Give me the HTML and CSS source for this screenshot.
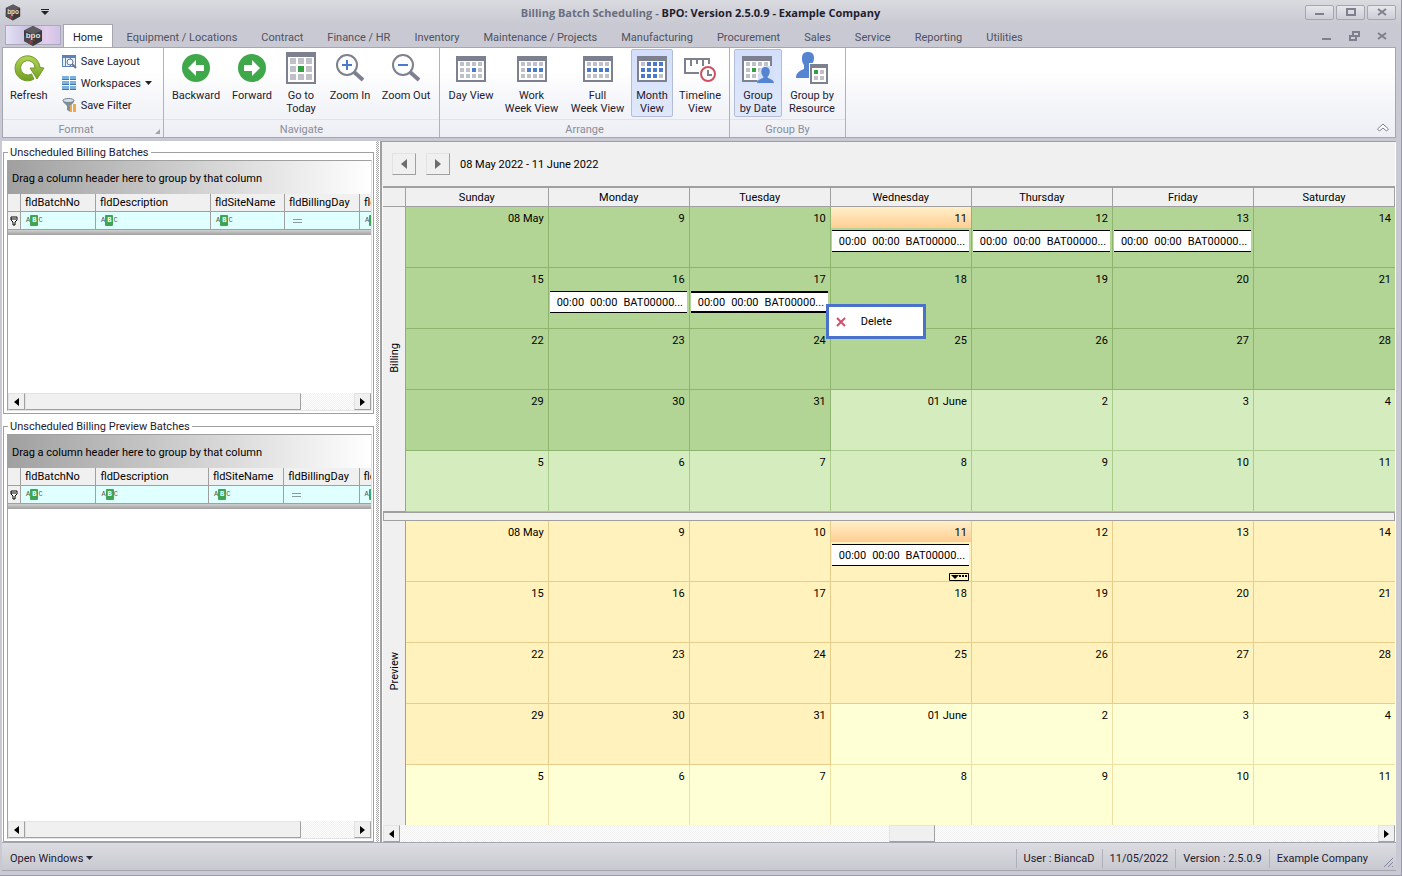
FILE: index.html
```html
<!DOCTYPE html>
<html lang="en">
<head>
    <meta charset="utf-8">
    <title>Billing Batch Scheduling - BPO</title>
    <link rel="stylesheet" href="styles.css">
</head>
<body>
    <!-- Shared icons -->
    <svg class="sprite" aria-hidden="true">
        <symbol id="logo" viewBox="0 0 20 20">
            <path d="M10 0l9 4.500v10.500l-9 5-9-5V4.500z" fill="#3b3a3c"/>
            <path d="M10 0l9 4.500-9 4-9-4z" fill="#5c5b5e"/>
            <path d="M10 11v9l-9-5v-5z" fill="#4c4a4c"/>
            <path d="M6 14l3 1-2 3zM10 13l2 1-1 1z" fill="#b03a3a"/>
            <text x="10" y="12" text-anchor="middle" font-size="8" font-weight="bold" fill="#e2e2e5" font-family="Liberation Sans">bpo</text>
        </symbol>
        <symbol id="cal-frame" viewBox="0 0 30 26">
            <path d="M0 0h30v26H0z" fill="#7d808f"/>
            <path d="M2 5h26v19H2z" fill="#fff"/>
            <path d="M4 6h4v4H4zM10 6h4v4h-4zM16 6h4v4h-4zM22 6h4v4h-4zM4 12h4v4H4zM10 12h4v4h-4zM16 12h4v4h-4zM22 12h4v4h-4zM4 18h4v4H4zM10 18h4v4h-4zM16 18h4v4h-4zM22 18h4v4h-4z" fill="#c0c0c8"/>
        </symbol>
        <symbol id="person" viewBox="0 0 17 17">
            <path d="M8.500 0c3 0 4.500 2 4.200 5-.2 2-1 3.500-2 4.500v1.500c3 .8 5.800 2 6.300 5H0c.5-3 3.300-4.200 6.300-5V9.500c-1-1-1.800-2.500-2-4.500C4 2 5.500 0 8.500 0z" fill="#5584d1"/>
        </symbol>
    </svg>

    <div class="window">
        <header class="titlebar">
            <div class="quick">
                <svg width="16" height="17"><use href="#logo"/></svg>
                <button class="quick-more" aria-label="Customize toolbar"><svg width="8" height="6"><path d="M0 0h8v1H0zM0 2h8L4 6z" fill="#222"/></svg></button>
            </div>
            <h1><span>Billing Batch Scheduling - </span>BPO: Version 2.5.0.9 - Example Company</h1>
            <div class="win-buttons">
                <button aria-label="Minimize"><svg width="10" height="8"><path d="M0 5h9v2H0z" fill="#7d808c"/></svg></button>
                <button aria-label="Maximize"><svg width="10" height="8"><path d="M1 1h8v6H1z" fill="none" stroke="#7d808c" stroke-width="2"/></svg></button>
                <button aria-label="Close"><svg width="10" height="8"><path d="M1 1l8 6M9 1L1 7" stroke="#7d808c" stroke-width="2"/></svg></button>
            </div>
        </header>

        <nav class="tabs">
            <button class="app-button" aria-label="Application menu"><svg width="20" height="20"><use href="#logo"/></svg></button>
            <a href="#" class="tab active">Home</a>
            <a href="#" class="tab">Equipment / Locations</a>
            <a href="#" class="tab">Contract</a>
            <a href="#" class="tab">Finance / HR</a>
            <a href="#" class="tab">Inventory</a>
            <a href="#" class="tab">Maintenance / Projects</a>
            <a href="#" class="tab">Manufacturing</a>
            <a href="#" class="tab">Procurement</a>
            <a href="#" class="tab">Sales</a>
            <a href="#" class="tab">Service</a>
            <a href="#" class="tab">Reporting</a>
            <a href="#" class="tab">Utilities</a>
            <div class="mdi-buttons">
                <button aria-label="Minimize page"><svg width="11" height="10"><path d="M1 7h9v2H1z" fill="#7d808c"/></svg></button>
                <button aria-label="Restore page"><svg width="11" height="10"><path d="M4 1h6v4H4zM1 5h6v4H1z" fill="#cfcfd8" stroke="#7d808c" stroke-width="2"/></svg></button>
                <button aria-label="Close page"><svg width="11" height="10"><path d="M1 2l8 6M9 2L1 8" stroke="#7d808c" stroke-width="2"/></svg></button>
            </div>
        </nav>

        <section class="ribbon">
            <div class="group">
                <div class="group-body format">
                    <button class="big">
                        <svg width="32" height="32" viewBox="0 0 32 32">
                            <defs><linearGradient id="green" x1="0" y1="0" x2="0" y2="1"><stop offset="0" stop-color="#b5d557"/><stop offset="1" stop-color="#6f9f20"/></linearGradient></defs>
                            <path d="M27 15.500A12.500 12.500 0 1 0 21 27l-2.500-5A7.200 7.200 0 1 1 22 16h-5l7 11 7-11z" fill="url(#green)" stroke="#739a2d"/>
                        </svg>
                        Refresh
                    </button>
                    <div class="small-list">
                        <button class="small">
                            <svg width="15" height="15"><path d="M0 1h14v12H0z" fill="#5c83b8"/><path d="M1 4h2v8H1zM4 4h4v8H4zM9 4h4v8H9z" fill="#e6f0fa"/><circle cx="8" cy="8" r="3" fill="#f5f8fc" stroke="#68788e"/><path d="M10 10l4 4" stroke="#68788e" stroke-width="2"/></svg>
                            Save Layout
                        </button>
                        <button class="small">
                            <svg width="15" height="15"><path d="M0 0h7v4H0zM8 0h6v4H8zM0 5h7v4H0zM8 5h6v4H8zM0 10h7v4H0zM8 10h6v4H8z" fill="#7db2df"/><path d="M0 3h7v1H0zM8 3h6v1H8zM0 8h7v1H0zM8 8h6v1H8zM0 13h7v1H0zM8 13h6v1H8z" fill="#3d78b0"/></svg>
                            Workspaces
                            <svg width="7" height="4"><path d="M0 0h7L3.500 4z" fill="#222"/></svg>
                        </button>
                        <button class="small">
                            <svg width="15" height="15"><path d="M1 2h11v2L8.500 8v6L5 12V8L1 4z" fill="#7e8f9e"/><ellipse cx="6.500" cy="2.500" rx="5.500" ry="2" fill="#d8e2ea" stroke="#6e7d8b"/><path d="M8 7h2v7H8zM11 6h3v8h-3z" fill="#efaa45"/></svg>
                            Save Filter
                        </button>
                    </div>
                </div>
                <h2>Format</h2>
                <svg class="launcher" width="5" height="5"><path d="M5 0v5H0z" fill="#a0a3ac"/></svg>
            </div>

            <div class="group">
                <div class="group-body navigate">
                    <button class="big">
                        <svg width="32" height="32" viewBox="0 0 32 32"><circle cx="16" cy="16" r="14" fill="#3fa84b"/><path d="M8 16l8-8v5h8v6h-8v5z" fill="#fff"/></svg>
                        Backward
                    </button>
                    <button class="big">
                        <svg width="32" height="32" viewBox="0 0 32 32"><circle cx="16" cy="16" r="14" fill="#3fa84b"/><path d="M24 16l-8-8v5H8v6h8v5z" fill="#fff"/></svg>
                        Forward
                    </button>
                    <button class="big">
                        <svg width="32" height="32" viewBox="0 0 32 32"><path d="M1 0h30v32H1z" fill="#7d808f"/><path d="M3 5h26v25H3z" fill="#fff"/><path d="M5 6h6v6H5zM13 6h6v6h-6zM21 6h6v6h-6zM5 14h6v6H5zM21 14h6v6h-6zM5 22h6v6H5zM13 22h6v6h-6zM21 22h6v6h-6z" fill="#c0c0c8"/><path d="M13 14h6v6h-6z" fill="#35a042"/></svg>
                        Go to<br>Today
                    </button>
                    <button class="big">
                        <svg width="32" height="32" viewBox="0 0 32 32"><circle cx="13" cy="13" r="10" fill="none" stroke="#7d808f" stroke-width="2"/><path d="M20 20l9 8" stroke="#7d808f" stroke-width="4"/><path d="M8 13h10M13 8v10" stroke="#4a7bcb" stroke-width="2"/></svg>
                        Zoom In
                    </button>
                    <button class="big">
                        <svg width="32" height="32" viewBox="0 0 32 32"><circle cx="13" cy="13" r="10" fill="none" stroke="#7d808f" stroke-width="2"/><path d="M20 20l9 8" stroke="#7d808f" stroke-width="4"/><path d="M8 13h10" stroke="#4a7bcb" stroke-width="2"/></svg>
                        Zoom Out
                    </button>
                </div>
                <h2>Navigate</h2>
            </div>

            <div class="group">
                <div class="group-body arrange">
                    <button class="big">
                        <svg width="30" height="32" viewBox="0 -4 30 32"><use href="#cal-frame" width="30" height="26"/><path d="M16 12h4v4h-4z" fill="#4a7bcb"/></svg>
                        Day View
                    </button>
                    <button class="big">
                        <svg width="30" height="32" viewBox="0 -4 30 32"><use href="#cal-frame" width="30" height="26"/><path d="M10 12h4v4h-4zM16 12h4v4h-4zM22 12h4v4h-4z" fill="#4a7bcb"/></svg>
                        Work<br>Week View
                    </button>
                    <button class="big">
                        <svg width="30" height="32" viewBox="0 -4 30 32"><use href="#cal-frame" width="30" height="26"/><path d="M4 12h4v4H4zM10 12h4v4h-4zM16 12h4v4h-4zM22 12h4v4h-4z" fill="#4a7bcb"/></svg>
                        Full<br>Week View
                    </button>
                    <button class="big pressed">
                        <svg width="30" height="32" viewBox="0 -4 30 32"><use href="#cal-frame" width="30" height="26"/><path d="M10 6h4v4h-4zM16 6h4v4h-4zM22 6h4v4h-4zM4 12h4v4H4zM10 12h4v4h-4zM16 12h4v4h-4zM22 12h4v4h-4zM4 18h4v4H4zM10 18h4v4h-4zM16 18h4v4h-4z" fill="#4a7bcb"/></svg>
                        Month<br>View
                    </button>
                    <button class="big">
                        <svg width="32" height="32" viewBox="0 0 32 32"><path d="M15 21H1V7h24v5M7 7v7M13 7v5M19 7v7" fill="none" stroke="#7d808f" stroke-width="2"/><circle cx="24" cy="22" r="7" fill="#fff" stroke="#d04f60" stroke-width="2"/><path d="M24 18v5h4" fill="none" stroke="#7d808f" stroke-width="2"/></svg>
                        Timeline<br>View
                    </button>
                </div>
                <h2>Arrange</h2>
            </div>

            <div class="group">
                <div class="group-body group-by">
                    <button class="big pressed">
                        <svg width="32" height="32" viewBox="0 0 32 32"><use href="#cal-frame" y="4" width="30" height="26"/><path d="M10 16h4v4h-4z" fill="#35a042"/><path d="M17 19q3-6 10-5h5v18H15z" fill="#d6e1f9"/><use href="#person" x="15" y="15" width="17" height="17"/></svg>
                        Group<br>by Date
                    </button>
                    <button class="big">
                        <svg width="32" height="32" viewBox="0 0 32 32"><path d="M12 0c4 0 6 2 6 6 0 3-1 5-3 7v2h-1v11H0c0-5 3-7 8-9v-4C6 11 6 8 6 6c0-4 2-6 6-6z" fill="#5584d1"/><path d="M13 11h19v21H13z" fill="#fff"/><path d="M14 12h18v20H14z" fill="#7d808f"/><path d="M16 16h14v14H16z" fill="#fff"/><path d="M24 18h4v4h-4zM18 24h4v4h-4zM24 24h4v4h-4z" fill="#c0c0c8"/><path d="M18 18h4v4h-4z" fill="#35a042"/></svg>
                        Group by<br>Resource
                    </button>
                </div>
                <h2>Group By</h2>
            </div>
            <button class="collapse" aria-label="Collapse ribbon"><svg width="14" height="10"><path d="M1.500 7L7 2l5.500 5-2 2L7 6 3.500 9z" fill="#fff" stroke="#7d808c"/></svg></button>
        </section>

        <main class="workspace">
            <aside class="batches">
                <fieldset class="batch-box unscheduled">
                    <legend>Unscheduled Billing Batches</legend>
                    <div class="grid-box">
                        <div class="group-panel">Drag a column header here to group by that column</div>
                        <table class="data-grid">
                            <colgroup><col class="c-ind"><col class="c-no"><col class="c-desc"><col class="c-site"><col class="c-day"><col class="c-no"></colgroup>
                            <thead>
                                <tr><th></th><th>fldBatchNo</th><th>fldDescription</th><th>fldSiteName</th><th>fldBillingDay</th><th>fld</th></tr>
                            </thead>
                            <tbody>
                                <tr>
                                    <td class="ind"><svg width="8" height="10"><path d="M1 1h6v3L5 6v3H3V6L1 4z" fill="#fff" stroke="#000"/><path d="M1 3h5" stroke="#000"/></svg></td>
                                    <td><span class="abc">A<b>B</b>C</span></td>
                                    <td><span class="abc">A<b>B</b>C</span></td>
                                    <td><span class="abc">A<b>B</b>C</span></td>
                                    <td><span class="eq"></span></td>
                                    <td><span class="abc">A<b>B</b>C</span></td>
                                </tr>
                            </tbody>
                        </table>
                        <div class="grid-edge"></div>
                        <div class="scrollbar">
                            <button aria-label="Scroll left"><svg width="5" height="8"><path d="M5 0v8L0 4z"/></svg></button>
                            <div class="track"><div class="thumb wide"></div></div>
                            <button aria-label="Scroll right"><svg width="5" height="8"><path d="M0 0v8l5-4z"/></svg></button>
                        </div>
                    </div>
                </fieldset>

                <fieldset class="batch-box preview">
                    <legend>Unscheduled Billing Preview Batches</legend>
                    <div class="grid-box">
                        <div class="group-panel">Drag a column header here to group by that column</div>
                        <table class="data-grid">
                            <colgroup><col class="c-ind"><col class="c-no"><col class="c-desc"><col class="c-site"><col class="c-day"><col class="c-no"></colgroup>
                            <thead>
                                <tr><th></th><th>fldBatchNo</th><th>fldDescription</th><th>fldSiteName</th><th>fldBillingDay</th><th>fld</th></tr>
                            </thead>
                            <tbody>
                                <tr>
                                    <td class="ind"><svg width="8" height="10"><path d="M1 1h6v3L5 6v3H3V6L1 4z" fill="#fff" stroke="#000"/><path d="M1 3h5" stroke="#000"/></svg></td>
                                    <td><span class="abc">A<b>B</b>C</span></td>
                                    <td><span class="abc">A<b>B</b>C</span></td>
                                    <td><span class="abc">A<b>B</b>C</span></td>
                                    <td><span class="eq"></span></td>
                                    <td><span class="abc">A<b>B</b>C</span></td>
                                </tr>
                            </tbody>
                        </table>
                        <div class="grid-edge"></div>
                        <div class="scrollbar">
                            <button aria-label="Scroll left"><svg width="5" height="8"><path d="M5 0v8L0 4z"/></svg></button>
                            <div class="track"><div class="thumb wide"></div></div>
                            <button aria-label="Scroll right"><svg width="5" height="8"><path d="M0 0v8l5-4z"/></svg></button>
                        </div>
                    </div>
                </fieldset>
            </aside>

            <div class="splitter"></div>

            <section class="scheduler">
                <div class="date-nav">
                    <button aria-label="Previous"><svg width="6" height="10"><path d="M6 0v10L0 5z" fill="#6d6d6d"/></svg></button>
                    <button aria-label="Next"><svg width="6" height="10"><path d="M0 0v10l6-5z" fill="#6d6d6d"/></svg></button>
                    <span>08 May 2022 - 11 June 2022</span>
                </div>
                <div class="calendar-wrap">
                    <table class="calendar">
                        <thead>
                            <tr><th class="side"></th><th class="first">Sunday</th><th>Monday</th><th>Tuesday</th><th>Wednesday</th><th>Thursday</th><th>Friday</th><th>Saturday</th></tr>
                        </thead>
                        <tbody class="billing">
                            <tr>
                                <th class="side" rowspan="5"><span>Billing</span></th>
                                <td><time>08 May</time></td>
                                <td><time>9</time></td>
                                <td><time>10</time></td>
                                <td><time class="today">11</time><button class="event"><span>00:00</span><span>00:00</span><span>BAT00000...</span></button></td>
                                <td><time>12</time><button class="event"><span>00:00</span><span>00:00</span><span>BAT00000...</span></button></td>
                                <td><time>13</time><button class="event"><span>00:00</span><span>00:00</span><span>BAT00000...</span></button></td>
                                <td><time>14</time></td>
                            </tr>
                            <tr>
                                <td><time>15</time></td>
                                <td><time>16</time><button class="event"><span>00:00</span><span>00:00</span><span>BAT00000...</span></button></td>
                                <td><time>17</time><button class="event selected"><span>00:00</span><span>00:00</span><span>BAT00000...</span></button></td>
                                <td>
                                    <time>18</time>
                                    <div class="context-menu">
                                        <button><svg width="10" height="10"><path d="M1 1l8 8M9 1L1 9" stroke="#d2506a" stroke-width="2"/></svg>Delete</button>
                                    </div>
                                </td>
                                <td><time>19</time></td>
                                <td><time>20</time></td>
                                <td><time>21</time></td>
                            </tr>
                            <tr>
                                <td><time>22</time></td><td><time>23</time></td><td><time>24</time></td><td><time>25</time></td><td><time>26</time></td><td><time>27</time></td><td><time>28</time></td>
                            </tr>
                            <tr>
                                <td><time>29</time></td><td><time>30</time></td><td><time>31</time></td><td class="next"><time>01 June</time></td><td class="next"><time>2</time></td><td class="next"><time>3</time></td><td class="next"><time>4</time></td>
                            </tr>
                            <tr>
                                <td class="next"><time>5</time></td><td class="next"><time>6</time></td><td class="next"><time>7</time></td><td class="next"><time>8</time></td><td class="next"><time>9</time></td><td class="next"><time>10</time></td><td class="next"><time>11</time></td>
                            </tr>
                        </tbody>
                        <tbody class="divider"><tr><td colspan="8"></td></tr></tbody>
                        <tbody class="preview-rows">
                            <tr>
                                <th class="side" rowspan="5"><span>Preview</span></th>
                                <td><time>08 May</time></td>
                                <td><time>9</time></td>
                                <td><time>10</time></td>
                                <td>
                                    <time class="today">11</time><button class="event"><span>00:00</span><span>00:00</span><span>BAT00000...</span></button>
                                    <button class="more" aria-label="More batches"><svg width="20" height="8"><path d="M.5.500h19v7H.5z" fill="#fff5c0" stroke="#000"/><path d="M2 2h8L6 6zM10 2h2v2h-2zM13 2h2v2h-2zM16 2h2v2h-2z"/></svg></button>
                                </td>
                                <td><time>12</time></td>
                                <td><time>13</time></td>
                                <td><time>14</time></td>
                            </tr>
                            <tr>
                                <td><time>15</time></td><td><time>16</time></td><td><time>17</time></td><td><time>18</time></td><td><time>19</time></td><td><time>20</time></td><td><time>21</time></td>
                            </tr>
                            <tr>
                                <td><time>22</time></td><td><time>23</time></td><td><time>24</time></td><td><time>25</time></td><td><time>26</time></td><td><time>27</time></td><td><time>28</time></td>
                            </tr>
                            <tr>
                                <td><time>29</time></td><td><time>30</time></td><td><time>31</time></td><td class="next"><time>01 June</time></td><td class="next"><time>2</time></td><td class="next"><time>3</time></td><td class="next"><time>4</time></td>
                            </tr>
                            <tr>
                                <td class="next"><time>5</time></td><td class="next"><time>6</time></td><td class="next"><time>7</time></td><td class="next"><time>8</time></td><td class="next"><time>9</time></td><td class="next"><time>10</time></td><td class="next"><time>11</time></td>
                            </tr>
                        </tbody>
                    </table>
                </div>
                <div class="scrollbar">
                    <button aria-label="Scroll left"><svg width="5" height="8"><path d="M5 0v8L0 4z"/></svg></button>
                    <div class="track"><div class="thumb narrow"></div></div>
                    <button aria-label="Scroll right"><svg width="5" height="8"><path d="M0 0v8l5-4z"/></svg></button>
                </div>
            </section>
        </main>

        <footer class="statusbar">
            <button class="open-windows">Open Windows <svg width="7" height="4"><path d="M0 0h7L3.500 4z" fill="#2a2c3c"/></svg></button>
            <span class="status">User : BiancaD</span>
            <span class="status">11/05/2022</span>
            <span class="status">Version : 2.5.0.9</span>
            <span class="status">Example Company</span>
            <svg class="grip" width="11" height="11"><path d="M1 10L10 1M5 10l5-5M9 10l1-1" stroke="#85879a"/></svg>
        </footer>
    </div>
</body>
</html>
```
FILE: styles.css
```css
* {
    box-sizing: border-box;
}
body {
    margin: 0;
    font-family: Roboto, Tahoma, sans-serif;
    font-size: 11px;
    line-height: 13px;
    color: #1e2030;
}
button {
    font: inherit;
    color: inherit;
    background: none;
    border: none;
    padding: 0;
}
svg {
    display: block;
    flex: none;
    overflow: visible;
}
.sprite {
    position: absolute;
    width: 0;
    height: 0;
}
.window {
    display: flex;
    flex-direction: column;
    height: 100vh;
    padding: 0 5px 4px 2px;
    background: #c9c9d3;
    border-right: 1px solid #9a9aa8;
    border-bottom: 1px solid #9a9aa8;
}

/* Title bar */
.titlebar {
    display: grid;
    grid-template-columns: 1fr auto 1fr;
    align-items: center;
    height: 24px;
    margin: 0 -5px 0 -2px;
    padding: 0 5px;
    background: linear-gradient(#dadbe0, #c9c9d3);
}
.titlebar h1 {
    margin: 0;
    font-family: "Open Sans", Tahoma, sans-serif;
    font-size: 11px;
    font-weight: bold;
}
.titlebar h1 span {
    color: #6b6e7e;
}
.quick {
    display: flex;
    align-items: center;
    gap: 20px;
}
.win-buttons {
    display: flex;
    justify-content: flex-end;
    gap: 2px;
}
.win-buttons button {
    display: flex;
    align-items: center;
    justify-content: center;
    width: 29px;
    height: 15px;
    border: 1px solid #a5a6b0;
    border-radius: 2px;
    background: linear-gradient(#e6e7ea, #cdced6);
}

/* Ribbon tabs */
.tabs {
    display: flex;
    align-items: flex-end;
    height: 23px;
    padding-left: 3px;
}
.app-button {
    display: flex;
    justify-content: center;
    width: 56px;
    height: 20px;
    margin-bottom: 2px;
    border: 1px solid #aaa8bd;
    background: linear-gradient(90deg, #e4e2f5, #c9bce0 45%, #e3cdec 75%, #cfc3e6);
}
.tab {
    height: 22px;
    padding: 6px 12px 0;
    color: #50525f;
    text-decoration: none;
    white-space: nowrap;
}
.tab.active {
    height: 23px;
    margin: 0 2px;
    padding: 6px 9px 0;
    border: 1px solid #a5a6b0;
    border-bottom: none;
    background: #fff;
    color: #1e2030;
}
.mdi-buttons {
    display: flex;
    gap: 17px;
    margin-left: auto;
    padding: 0 8px 6px 0;
}

/* Ribbon */
.ribbon {
    display: flex;
    height: 91px;
    border: 1px solid #a5a6b0;
    background: linear-gradient(#fff 25%, #f5f6fa 60%, #edeff4);
}
.group {
    position: relative;
    display: flex;
    flex-direction: column;
    border-right: 1px solid #b0b1ba;
}
.group-body {
    flex: 1;
    padding: 1px 3px 0;
}
.group h2 {
    margin: 0;
    padding: 3px 0 1px;
    border-top: 1px solid #e2e3e8;
    font-size: 11px;
    font-weight: normal;
    text-align: center;
    color: #8b8d98;
}
.format {
    display: flex;
    gap: 10px;
    width: 160px;
}
.format + h2 {
    padding-right: 14px;
}
.navigate,
.arrange,
.group-by {
    display: grid;
}
.navigate {
    grid-template-columns: 56px 56px 42px 56px 56px;
    padding: 1px 5px 0 4px;
}
.arrange {
    grid-template-columns: 54px 65px 65px 42px 52px;
    gap: 1px;
    padding: 1px 3px 0 4px;
}
.group-by {
    grid-template-columns: 48px 58px;
    gap: 1px;
    padding: 1px 4px 0;
}
.big {
    display: flex;
    flex-direction: column;
    align-items: center;
    height: 68px;
    border: 1px solid transparent;
    border-radius: 2px;
    padding: 2px 3px 0;
    white-space: nowrap;
}
.big svg {
    margin-bottom: 5px;
}
.pressed {
    border-color: #b4bdd6;
    background: linear-gradient(#d3dffb, #e0e8fa);
}
.small-list {
    display: flex;
    flex-direction: column;
    padding-top: 1px;
}
.small {
    display: flex;
    align-items: center;
    gap: 4px;
    height: 22px;
}
.launcher {
    position: absolute;
    right: 3px;
    bottom: 3px;
}
.collapse {
    align-self: flex-end;
    margin: 0 5px 5px auto;
}

/* Work area */
.workspace {
    display: flex;
    flex: 1;
    min-height: 0;
    margin-top: 3px;
    background: #fff;
}
.batches {
    display: flex;
    flex-direction: column;
    width: 374px;
    padding: 5px 2px 0 1px;
}
.batch-box {
    display: flex;
    flex-direction: column;
    min-width: 0;
    min-height: 0;
    margin: 0 0 6px;
    padding: 1px 2px 2px 3px;
    border: 1px solid #a0a0a0;
}
.batch-box legend {
    margin-left: 1px;
    padding: 0 2px;
}
.unscheduled {
    flex: 266 1 0;
}
.preview {
    flex: 421 1 0;
    margin-bottom: 0;
}
.grid-box {
    display: flex;
    flex: 1;
    flex-direction: column;
    width: 365px;
    height: 100%;
    min-height: 0;
    overflow: hidden;
    border: 1px solid #a0a0a0;
    border-right-color: #e3e3e3;
    border-bottom-color: #e3e3e3;
}
.group-panel {
    flex: none;
    height: 33px;
    padding: 11px 4px 0;
    background: linear-gradient(90deg, #a0a0a0, #fff);
    color: #000;
}
.data-grid {
    flex: none;
    width: 427px;
    table-layout: fixed;
    border-collapse: separate;
    border-spacing: 0;
    color: #000;
}
.grid-edge {
    flex: none;
    height: 5px;
    background: linear-gradient(#d0d0d0, #a0a0a0);
}
.c-ind { width: 13px; }
.c-no { width: 75px; }
.c-desc { width: 115px; }
.c-site { width: 74px; }
.c-day { width: 75px; }
.preview .c-desc { width: 112px; }
.preview .c-site { width: 75px; }
.data-grid th,
.data-grid td {
    height: 18px;
    padding: 0 4px;
    border-right: 1px solid #a0a0a0;
    border-bottom: 1px solid #a0a0a0;
    text-align: left;
    font-weight: normal;
}
.data-grid th {
    background: #f0f0f0;
}
.data-grid td {
    padding: 0 5px;
    background: #e0ffff;
}
.data-grid td.ind {
    padding: 0 2px;
    background: #f0f0f0;
}
.abc {
    display: flex;
    align-items: center;
    font: 7px/11px "Liberation Mono", monospace;
    color: #555;
}
.abc b {
    padding: 0 2px;
    border-radius: 1px;
    background: #3fa551;
    color: #fff;
}
.eq {
    display: block;
    width: 9px;
    height: 4px;
    margin-left: 3px;
    border: solid #8a9aa0;
    border-width: 1px 0;
}
.scrollbar {
    display: flex;
    flex: none;
    height: 17px;
    margin-top: auto;
}
.scrollbar button,
.thumb {
    border: 1px solid #a0a0a0;
    border-top-color: #e3e3e3;
    border-left-color: #e3e3e3;
    background: #f0f0f0;
}
.scrollbar button {
    display: flex;
    align-items: center;
    justify-content: center;
    width: 17px;
}
.track {
    flex: 1;
    background: repeating-conic-gradient(#f0f0f0 0 25%, #fff 0 50%) 0 0 / 2px 2px;
}
.thumb {
    height: 17px;
}
.wide {
    width: 84%;
}
.narrow {
    width: 46px;
    margin-left: 50%;
}
.splitter {
    width: 4px;
    background: repeating-conic-gradient(#a8a8a8 0 25%, #fff 0 50%) 0 0 / 2px 2px;
    border-right: 1px solid #fff;
}

/* Scheduler */
.scheduler {
    display: flex;
    flex: 1;
    flex-direction: column;
    min-width: 0;
    padding: 0 1px;
    border-top: 1px solid #a0a0a0;
    border-left: 2px solid #a0a0a0;
}
.date-nav {
    display: flex;
    flex: none;
    align-items: center;
    gap: 10px;
    height: 44px;
    margin-left: -1px;
    padding-left: 10px;
    background: #f0f0f0;
    color: #000;
}
.date-nav button {
    display: flex;
    align-items: center;
    justify-content: center;
    width: 24px;
    height: 22px;
    border: 1px solid #e3e3e3;
    border-right-color: #a0a0a0;
    border-bottom-color: #a0a0a0;
}
.calendar-wrap {
    flex: 1;
    min-height: 0;
    overflow: hidden;
}
.calendar {
    width: 100%;
    table-layout: fixed;
    border-collapse: separate;
    border-spacing: 0;
    border-top: 2px solid #a0a0a0;
    color: #000;
}
.calendar th {
    height: 19px;
    padding: 0;
    border-right: 1px solid #a0a0a0;
    border-bottom: 1px solid #a0a0a0;
    background: #f0f0f0;
    font-weight: normal;
}
.calendar th.side {
    width: 23px;
}
.calendar th.first {
    width: 14.1%;
}
.side span {
    display: inline-block;
    writing-mode: vertical-rl;
    transform: rotate(180deg);
}
/* ten equal week rows share what the bars leave of the window */
.calendar td {
    position: relative;
    height: calc((100vh - 266px) / 10);
    padding: 0;
    border-right: 1px solid #8db56e;
    border-bottom: 1px solid #8db56e;
    background: #b2d494;
    vertical-align: top;
}
.calendar td.next {
    border-color: #a9cc8a;
    background: #d5ecbe;
}
.calendar .preview-rows td {
    border-color: #e6cd8c;
    background: #fff2bc;
}
.calendar .preview-rows td.next {
    border-color: #ece0a4;
    background: #ffffd5;
}
.calendar td:last-child {
    border-right: none;
}
.preview-rows tr:last-child td {
    border-bottom: none;
}
.calendar .divider td {
    height: 9px;
    border: 1px solid #a0a0a0;
    background: #f0f0f0;
}
.calendar time {
    display: block;
    height: 21px;
    padding: 5px 4px 0;
    text-align: right;
}
.today {
    background: linear-gradient(#ffefc8, #ffce92);
}
.event {
    display: flex;
    align-items: center;
    gap: 6px;
    width: calc(100% - 3px);
    height: 22px;
    margin: 2px 2px 0 1px;
    padding: 0 0 0 7px;
    overflow: hidden;
    border: solid #000;
    border-width: 1px 0;
    background: #fff;
    white-space: nowrap;
}
.selected {
    border-width: 2px 0;
}
.more {
    position: absolute;
    right: 2px;
    bottom: 0;
}
.context-menu {
    position: absolute;
    z-index: 1;
    top: 36px;
    left: -5px;
    width: 100px;
    padding: 1px;
    border: 3px solid #4a72cc;
    background: #fff;
}
.context-menu button {
    display: flex;
    align-items: center;
    gap: 15px;
    width: 100%;
    height: 27px;
    padding-left: 6px;
}

/* Status bar */
.statusbar {
    display: flex;
    align-items: center;
    height: 29px;
    padding: 3px 2px 0 8px;
    border: 1px solid #a5a6b0;
    border-width: 1px 0;
    background: linear-gradient(#dcdde2, #c8c8d0);
}
.open-windows {
    display: flex;
    align-items: center;
    gap: 3px;
    margin-right: auto;
}
.status {
    padding: 3px 7px;
    border-left: 1px solid #b0b1bb;
}
.grip {
    align-self: flex-end;
    margin: 0 0 2px 8px;
}
```
